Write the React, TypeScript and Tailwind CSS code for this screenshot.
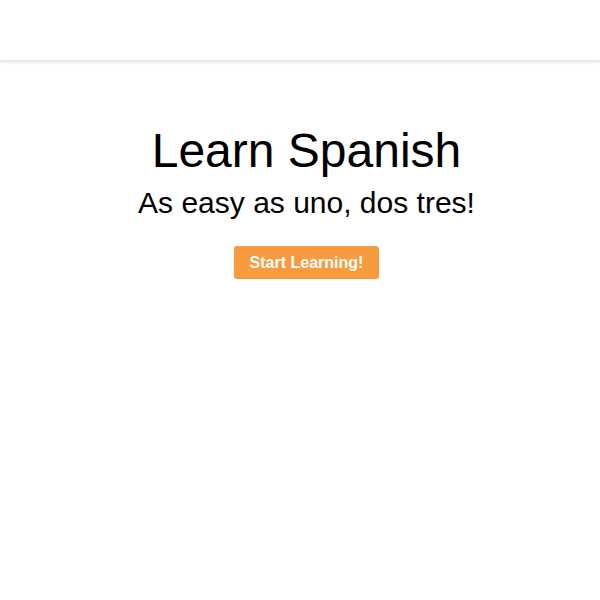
export default function App() {
  return (
    <div className="min-h-[600px] bg-white" style={{ fontFamily: '"Liberation Sans", Arial, sans-serif' }}>
      <header className="h-[62px] border-b-2 border-[#e8e8e8] bg-white shadow-[0_2px_3px_rgba(0,0,0,0.04)]" />
      <main className="flex flex-col items-center pl-[13px] pt-[61px]">
        <h1 className="text-[48px] leading-[56px] text-black">Learn Spanish</h1>
        <p className="mt-[7px] text-[30px] leading-[34px] text-black">As easy as uno, dos tres!</p>
        <button className="mt-[26px] h-[33px] rounded-[3px] bg-[#f89a3e] px-[16px] text-[16px] font-bold text-white">
          Start Learning!
        </button>
      </main>
    </div>
  );
}
